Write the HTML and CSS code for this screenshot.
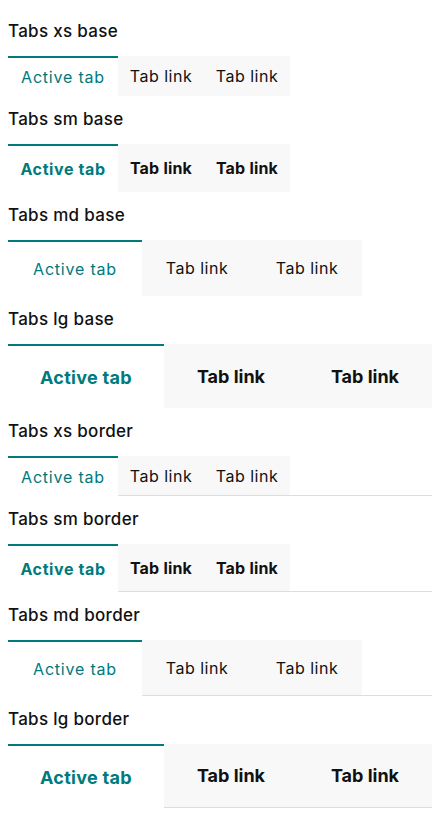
FILE: index.html
```html
<!DOCTYPE html>
<html lang="en">
<head>
<meta charset="utf-8">
<title>Tabs</title>
<link rel="stylesheet" href="styles.css">
</head>
<body>
<main class="page">
  <section class="demo">
    <h2 class="demo-title">Tabs xs base</h2>
    <nav class="tabs tabs--xs">
      <a class="tab tab--active">Active tab</a>
      <a class="tab">Tab link</a>
      <a class="tab">Tab link</a>
    </nav>
  </section>
  <section class="demo">
    <h2 class="demo-title">Tabs sm base</h2>
    <nav class="tabs tabs--sm">
      <a class="tab tab--active">Active tab</a>
      <a class="tab">Tab link</a>
      <a class="tab">Tab link</a>
    </nav>
  </section>
  <section class="demo">
    <h2 class="demo-title">Tabs md base</h2>
    <nav class="tabs tabs--md">
      <a class="tab tab--active">Active tab</a>
      <a class="tab">Tab link</a>
      <a class="tab">Tab link</a>
    </nav>
  </section>
  <section class="demo">
    <h2 class="demo-title">Tabs lg base</h2>
    <nav class="tabs tabs--lg">
      <a class="tab tab--active">Active tab</a>
      <a class="tab">Tab link</a>
      <a class="tab">Tab link</a>
    </nav>
  </section>
  <section class="demo">
    <h2 class="demo-title">Tabs xs border</h2>
    <nav class="tabs tabs--xs tabs--border">
      <a class="tab tab--active">Active tab</a>
      <a class="tab">Tab link</a>
      <a class="tab">Tab link</a>
      <span class="tabs-fill"></span>
    </nav>
  </section>
  <section class="demo">
    <h2 class="demo-title">Tabs sm border</h2>
    <nav class="tabs tabs--sm tabs--border">
      <a class="tab tab--active">Active tab</a>
      <a class="tab">Tab link</a>
      <a class="tab">Tab link</a>
      <span class="tabs-fill"></span>
    </nav>
  </section>
  <section class="demo">
    <h2 class="demo-title">Tabs md border</h2>
    <nav class="tabs tabs--md tabs--border">
      <a class="tab tab--active">Active tab</a>
      <a class="tab">Tab link</a>
      <a class="tab">Tab link</a>
      <span class="tabs-fill"></span>
    </nav>
  </section>
  <section class="demo">
    <h2 class="demo-title">Tabs lg border</h2>
    <nav class="tabs tabs--lg tabs--border">
      <a class="tab tab--active">Active tab</a>
      <a class="tab">Tab link</a>
      <a class="tab">Tab link</a>
      <span class="tabs-fill"></span>
    </nav>
  </section>
</main>
</body>
</html>
```

FILE: styles.css
```css
* {
  box-sizing: border-box;
}

html, body {
  margin: 0;
  padding: 0;
  background: #ffffff;
}

body {
  font-family: Inter, "Noto Sans", Arial, sans-serif;
  color: #111111;
}

.page {
  display: flex;
  flex-direction: column;
  gap: 11px;
  padding: 19px 8px 0;
}

.demo {
  display: flex;
  flex-direction: column;
}

.demo-title {
  margin: 0 0 13px;
  font-size: 17px;
  line-height: 24px;
  font-weight: 500;
  letter-spacing: 0.3px;
  color: #111111;
}

.tabs {
  display: flex;
  align-items: stretch;
}

.tab {
  display: flex;
  align-items: center;
  justify-content: center;
  flex: none;
  padding: 0;
  background: #f8f8f8;
  color: #111111;
  font-weight: 400;
  letter-spacing: 0.5px;
  white-space: nowrap;
  cursor: pointer;
}

.tab--active {
  background: #ffffff;
  color: #007a7c;
  border-top: 2px solid #007a7c;
  letter-spacing: 0.8px;
}

.tabs--xs .tab {
  width: 86px;
  height: 40px;
  font-size: 16px;
}

.tabs--sm .tab {
  width: 86px;
  height: 48px;
  font-size: 16px;
  font-weight: 700;
  letter-spacing: 0.2px;
}

.tabs--xs .tab--active,
.tabs--sm .tab--active {
  width: 110px;
}

.tabs--sm .tab--active {
  letter-spacing: 0.6px;
}

.tabs--md .tab {
  width: 110px;
  height: 56px;
  font-size: 16px;
}

.tabs--md .tab--active {
  width: 134px;
}

.tabs--lg .tab {
  width: 134px;
  height: 64px;
  font-size: 18px;
  font-weight: 700;
  letter-spacing: 0;
}

.tabs--lg .tab--active {
  width: 156px;
  letter-spacing: 0.3px;
}

.tabs--border .tab {
  border-bottom: 1px solid #dddddd;
}

.tabs--border .tab--active {
  border-bottom: none;
}

.tabs-fill {
  flex: 1;
  border-bottom: 1px solid #dddddd;
}
```
